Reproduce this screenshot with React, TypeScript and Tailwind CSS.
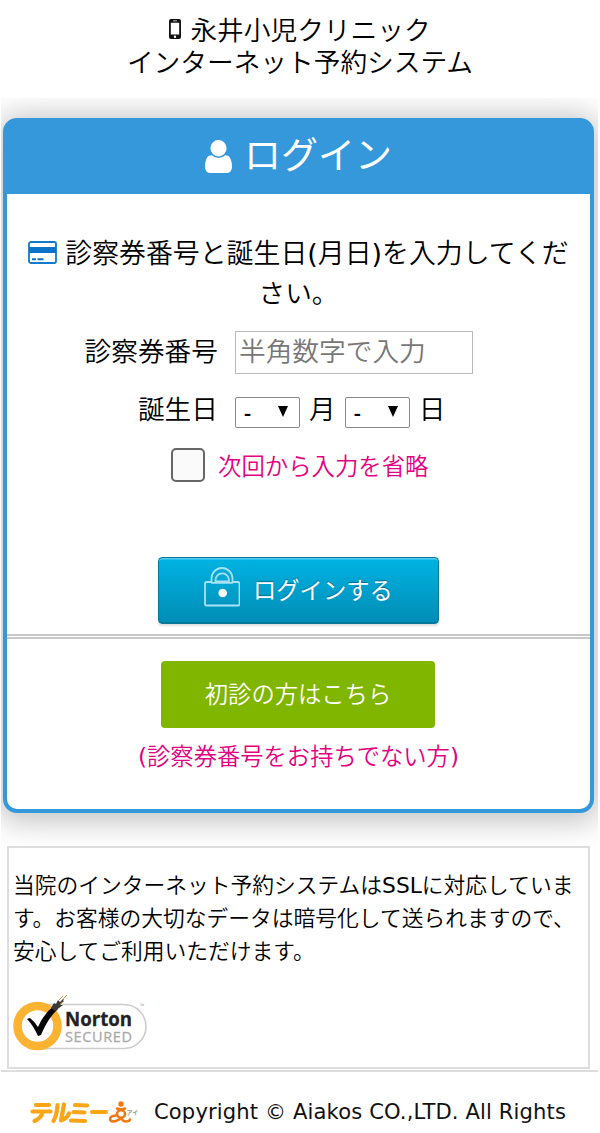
import React from "react";

const Phone = () => (
  <svg viewBox="0 0 12 20" className="h-[20px] w-[12px] shrink-0">
    <path fillRule="evenodd" fill="#111" d="M2 0h8a2 2 0 0 1 2 2v16a2 2 0 0 1-2 2H2a2 2 0 0 1-2-2V2a2 2 0 0 1 2-2Zm-.2 3.8v11.8h8.4V3.8ZM4 1.6v.7h4v-.7Zm2 14.9a1.2 1.2 0 1 0 0 2.4a1.2 1.2 0 0 0 0-2.4Z" />
  </svg>
);

const User = () => (
  <svg viewBox="256 128 1280 1536" className="-mt-[2px] h-[33px] w-[27px] shrink-0" preserveAspectRatio="none" fill="#fff">
    <path d="M1536 1399q0 109-62.5 187t-150.5 78h-854q-88 0-150.5-78t-62.5-187q0-85 8.5-160.5t31.5-152 58.5-131 94-89 134.5-34.5q131 128 313 128t313-128q76 0 134.5 34.5t94 89 58.5 131 31.5 152 8.5 160.5zm-256-887q0 159-112.5 271.5t-271.5 112.5-271.5-112.5-112.5-271.5 112.5-271.5 271.5-112.5 271.5 112.5 112.5 271.5z" />
  </svg>
);

const Card = () => (
  <svg viewBox="0 0 29 23" className="mt-px h-[23px] w-[29px] shrink-0">
    <rect x="1" y="1" width="27" height="21" rx="1.8" fill="none" stroke="#1279cb" strokeWidth="1.8" />
    <path fill="#0d73c8" d="M1 6h27v6H1ZM4 17.3h4v2H4ZM9.5 17.3h6v2h-6Z" />
  </svg>
);

const Lock = () => (
  <svg viewBox="0 0 36 40" className="h-[40px] w-[36px] shrink-0" fill="none" stroke="#a9e1f4" strokeWidth="1.8">
    <path d="M7.500 14.500V11.500a10.300 10.300 0 0 1 21 0v3M11.500 14.500V13a6.700 6.700 0 0 1 13.400 0v1.500Z" />
    <path d="M2.500 15H7q1 0 1 .8h20q0-.8 1-.8h4.500q2 0 2 2v20q0 1.500-1.500 1.500H2.500Q1 38.500 1 37V17q0-2 1.500-2Z" />
    <circle cx="18.700" cy="26" r="4.300" fill="#fff" stroke="none" />
  </svg>
);

const Norton = () => (
  <svg viewBox="0 0 136 60" className="block h-[60px] w-[136px] overflow-visible" fontFamily="'Open Sans', sans-serif">
    <path d="M30 11.500H111a21.500 21.500 0 0 1 0 44H30" fill="#fff" stroke="#ccc" strokeWidth="1.600" />
    <circle cx="24.500" cy="33" r="20" fill="#fff" stroke="#fbb331" strokeWidth="8.500" />
    <path d="M14 26l3-1q5 4 8 9Q31 20 42 12l3 4Q35 25 28 42l-3 1q-5-11-11-17Z" fill="#050505" />
    <path d="M38 15l3-5 2 1 2-4 2 2 4-4-1 4-3 3 3 0-8 6Z" fill="#3b3937" />
    <path d="M46 7l4-4M51 5l3-3M47 11l4-3" stroke="#c4953f" strokeWidth="1" />
    <text x="52" y="33" fontSize="19" fontWeight="700" fill="#222" stroke="#222" strokeWidth=".3" textLength="67" lengthAdjust="spacingAndGlyphs">Norton</text>
    <text x="52" y="48.500" fontSize="14.500" fontWeight="500" fill="#aaa" stroke="#aaa" strokeWidth=".3" textLength="67">SECURED</text>
    <text x="127" y="15" fontSize="6" fill="#888">™</text>
  </svg>
);

const Tellme = () => (
  <svg viewBox="0 0 108 24" className="h-[24px] w-[108px] shrink-0" fill="none" strokeLinecap="round" strokeLinejoin="round">
    <g stroke="#f9a516" strokeWidth="4.2">
      <path d="M6 4H19M2.500 10.500h18M12.500 11q-1 6-8 9" />
      <path d="M27.500 4q-.5 10-4 16M34 3.500l-3 16q6-2 8-7" />
      <path d="M45 4l12 .5M43.500 11l11 .5M41 19.500l14 .5M62 11h14" />
    </g>
    <g stroke="#f07a10" strokeWidth="2.6">
      <path d="M87 7.500q4 1.500 8 0" />
      <ellipse cx="91" cy="13" rx="4" ry="3.700" />
      <path d="M86 14.500q-6 .5-6 3.500t5 2.200q4-1 6-3q2 3 4.500 3.300q4 0 4.500-2" />
      <circle cx="91" cy="3" r="1.400" fill="#f07a10" />
    </g>
    <text x="96.500" y="14" fontSize="6" fontWeight="700" fill="#999" fontFamily="'Noto Sans CJK JP', sans-serif">アイ</text>
  </svg>
);

const Select = () => (
  <div className="flex h-[31px] w-[65px] items-center justify-between rounded-[2px] border border-[#888] bg-white pr-[11px] pl-[8px] text-black">
    <span className="font-['Open_Sans'] text-[22px] leading-none font-semibold">-</span>
    <svg viewBox="0 0 10 11" className="-mt-px h-[11px] w-[10px]">
      <path d="M0 0h10L5 11Z" />
    </svg>
  </div>
);

const Latin = ({ children }: { children: React.ReactNode }) => (
  <span className="font-['DejaVu_Sans',sans-serif] leading-none font-normal">{children}</span>
);

export default function App() {
  return (
    <div className="h-[1133px] w-[600px] overflow-hidden bg-white font-['Noto_Sans_CJK_JP',sans-serif] font-[350] whitespace-nowrap text-black" lang="ja">
      <header className="flex h-[98px] flex-col items-center pt-[13px] text-[26.7px] leading-[32px]">
        <div className="flex items-center gap-[9px]">
          <Phone />
          <span>永井小児クリニック</span>
        </div>
        <div>インターネット予約システム</div>
      </header>

      <main className="mx-px h-[972px] w-[597px] overflow-hidden">
        <section className="mt-[20px] ml-[2px] h-[695px] w-[591px] rounded-[14px] border-4 border-[#3498db] bg-white shadow-[0_3px_30px_6px_rgba(0,0,0,0.24)]">
          <h1 className="-mx-px -mt-px flex h-[73px] items-center justify-center rounded-t-[10px] bg-[#3498db] text-[37px] leading-none font-normal text-white">
            <User />
            <span className="-mt-[9px] ml-[12px]">ログイン</span>
          </h1>
          <div className="flex h-[440px] flex-col items-center pt-[38px]">
            <div className="flex h-[40px] items-center gap-[8px] text-[26.9px] leading-[40px]">
              <Card />
              <span>診察券番号と誕生日<Latin>(</Latin>月日<Latin>)</Latin>を入力してくだ</span>
            </div>
            <div className="h-[40px] text-[26.7px] leading-[40px]">さい。</div>
            <div className="mt-[19px] flex w-full items-center">
              <span className="-mt-[7px] w-[211px] text-right text-[26.7px] leading-[43px]">診察券番号</span>
              <div className="ml-[17px] h-[43px] w-[238px] border border-[#bbb] pl-[3px] text-[26.7px] leading-[36px] text-[#777]">半角数字で入力</div>
            </div>
            <div className="mt-[14px] flex h-[40px] w-full items-center text-[26.7px] leading-[40px]">
              <span className="mr-[17px] w-[211px] text-right">誕生日</span>
              <div className="mt-[8px]"><Select /></div>
              <span className="mx-[9px]">月</span>
              <div className="mt-[8px]"><Select /></div>
              <span className="ml-[9px]">日</span>
            </div>
            <div className="mt-[20px] flex h-[34px] w-full items-center pl-[164px] text-[23.4px] text-[#e4007f]">
              <div className="h-[34px] w-[34px] rounded-[5px] border-2 border-[#666] bg-[#fafafa]" />
              <span className="ml-[13px] leading-[34px]">次回から入力を省略</span>
            </div>
            <button className="mt-[75px] flex h-[67px] w-[281px] shrink-0 items-center rounded-[4px] border border-[#08789b] bg-linear-to-b from-[#00b3e3] to-[#008db5] pl-[45px] text-[23.3px] text-white shadow-[inset_0_1.5px_0_#55cbed,inset_0_-1px_0_#08789b,0_2px_2px_rgba(0,0,0,0.12)]">
              <div className="-mt-[8px]"><Lock /></div>
              <span className="-mt-[2px] ml-[13px] font-normal [text-shadow:0_-1px_1px_#006f91]">ログインする</span>
            </button>
          </div>
          <div className="h-[5px] border-y-2 border-[#c8c8c8]" />
          <div className="flex flex-col items-center pt-[22px] text-[23.3px]">
            <button className="mr-px h-[67px] w-[274px] rounded-[4px] bg-[#80b500] pb-[2px] text-white">初診の方はこちら</button>
            <span className="mt-[9px] leading-[36px] text-[#e4007f]"><Latin>(</Latin>診察券番号をお持ちでない方<Latin>)</Latin></span>
          </div>
        </section>
        <section className="mt-[33px] ml-[6px] h-[223px] w-[583px] border-2 border-[#ddd] bg-white pt-[19px] pl-[4px]">
          <div className="text-[21.75px] leading-[33px]">
            <p>当院のインターネット予約システムは<Latin>SSL</Latin>に対応していま</p>
            <p>す。お客様の大切なデータは暗号化して送られますので、</p>
            <p>安心してご利用いただけます。</p>
          </div>
          <div className="mt-[27px]"><Norton /></div>
        </section>
      </main>
      <footer className="mx-px flex h-[63px] w-[597px] items-start border-t-2 border-[#ddd] pt-[24px] pl-[29px]">
        <div className="mt-[5px]"><Tellme /></div>
        <span className="ml-[16px] font-['DejaVu_Sans',sans-serif] text-[21.1px] leading-[32px] font-normal tracking-[0.12px] text-[#111]">Copyright © Aiakos CO.,LTD. All Rights</span>
      </footer>
    </div>
  );
}
